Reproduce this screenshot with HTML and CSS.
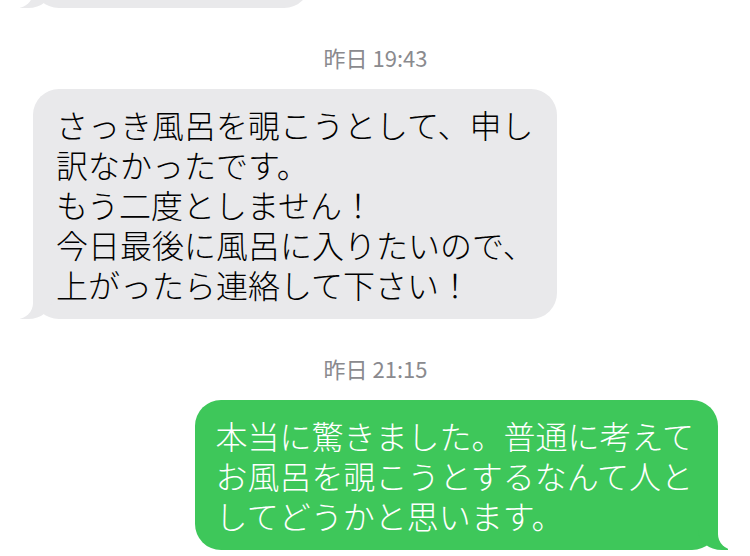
FILE: index.html
```html
<!DOCTYPE html>
<html lang="ja">
<head>
    <meta charset="UTF-8">
    <meta name="viewport" content="width=device-width, initial-scale=1.0">
    <title>メッセージ</title>
    <link rel="stylesheet" href="styles.css">
</head>
<body>
    <div class="thread">
        <div class="bubble received cut"></div>

        <div class="stamp">昨日 19:43</div>
        <div class="bubble received">
            さっき風呂を覗こうとして、申し<br>
            訳なかったです。<br>
            もう二度としません！<br>
            今日最後に風呂に入りたいので、<br>
            上がったら連絡して下さい！
        </div>

        <div class="stamp">昨日 21:15</div>
        <div class="bubble sent">
            本当に驚きました。普通に考えて<br>
            お風呂を覗こうとするなんて人と<br>
            してどうかと思います。
        </div>
    </div>
</body>
</html>
```

FILE: styles.css
```css
body {
    margin: 0;
    background: #fff;
    font-family: "Noto Sans CJK JP", "Noto Sans", sans-serif;
    overflow: hidden;
}
.thread {
    display: flex;
    flex-direction: column;
    padding: 0 32px 0 33px;
}
.stamp {
    align-self: center;
    font-size: 22px;
    line-height: 26px;
    color: #8a8a8e;
    margin-top: 36px;
    margin-bottom: 19px;
}
.bubble {
    position: relative;
    font-size: 32px;
    line-height: 40px;
    font-weight: 300;
    padding: 15px 22px 15px 23px;
    border-radius: 26px;
    white-space: nowrap;
}
.received {
    align-self: flex-start;
    background: #e9e9eb;
    color: #000;
}
.sent {
    align-self: flex-end;
    background: #3ec75a;
    color: #fff;
    padding-left: 21px;
    padding-right: 24px;
}
.cut {
    width: 277px;
    height: 60px;
    padding: 0;
    margin-top: -52px;
    box-sizing: border-box;
}

/* tails */
.received::before,
.received::after,
.sent::before,
.sent::after {
    content: "";
    position: absolute;
    bottom: 0;
    height: 30px;
}
.received::before {
    left: -13px;
    width: 32px;
    background: #e9e9eb;
    border-bottom-right-radius: 24px 20px;
}
.received::after {
    left: -36px;
    width: 36px;
    background: #fff;
    border-bottom-right-radius: 16px;
}
.sent::before {
    right: -10px;
    width: 30px;
    background: #3ec75a;
    border-bottom-left-radius: 24px 20px;
}
.sent::after {
    right: -34px;
    width: 34px;
    background: #fff;
    border-bottom-left-radius: 16px;
}
```
